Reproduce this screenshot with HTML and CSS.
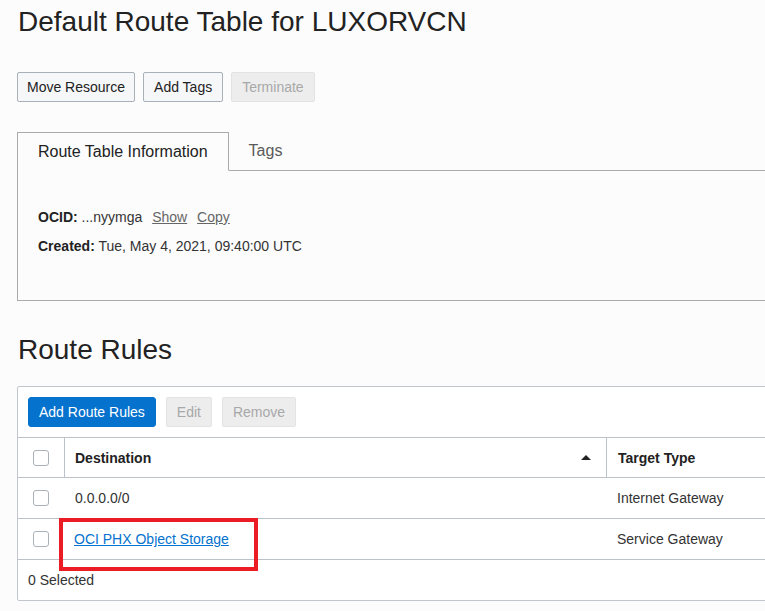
FILE: index.html
```html
<!DOCTYPE html>
<html>
<head>
<meta charset="utf-8">
<link rel="stylesheet" href="styles.css">
</head>
<body>
<div class="page">
  <h1 class="title">Default Route Table for LUXORVCN</h1>
  <div class="actions">
    <button class="btn tight">Move Resource</button>
    <button class="btn">Add Tags</button>
    <button class="btn disabled">Terminate</button>
  </div>

  <div class="tabpanel">
    <div class="tabs">
      <div class="tab active">Route Table Information</div>
      <div class="tab">Tags</div>
      <div class="tab-fill"></div>
    </div>
    <div class="info">
      <div class="info-row"><b>OCID:</b> ...nyymga <a class="minilink">Show</a> <a class="minilink">Copy</a></div>
      <div class="info-row"><b>Created:</b> Tue, May 4, 2021, 09:40:00 UTC</div>
    </div>
  </div>

  <h2 class="title section">Route Rules</h2>

  <div class="tablebox">
    <div class="toolbar">
      <button class="btn primary">Add Route Rules</button>
      <button class="btn disabled">Edit</button>
      <button class="btn disabled">Remove</button>
    </div>
    <div class="grid">
      <div class="cell head check"><span class="cb"></span></div>
      <div class="cell head dest">Destination <span class="sort"></span></div>
      <div class="cell head target">Target Type</div>

      <div class="cell check"><span class="cb"></span></div>
      <div class="cell">0.0.0.0/0</div>
      <div class="cell">Internet Gateway</div>

      <div class="cell check"><span class="cb"></span></div>
      <div class="cell link-cell"><a class="link">OCI PHX Object Storage</a></div>
      <div class="cell">Service Gateway</div>
    </div>
    <div class="footer">0 Selected</div>
    <div class="highlight"></div>
  </div>
</div>
</body>
</html>
```
FILE: styles.css
```css
html { overflow: hidden; }
body {
  margin: 0;
  background: #fcfcfc;
  font-family: "Liberation Sans", Arial, sans-serif;
  color: #333;
}
.page {
  width: 1000px;
  padding: 5px 0 0 17px;
}
.title {
  margin: 0;
  font-size: 28px;
  font-weight: normal;
  line-height: 34px;
  color: #222;
  padding-left: 1px;
}
.actions {
  display: flex;
  gap: 8px;
  margin-top: 33px;
}
.btn {
  font-family: "Liberation Sans", Arial, sans-serif;
  font-size: 14px;
  height: 30px;
  padding: 0 10px;
  border: 1px solid #a8b0b9;
  border-radius: 2px;
  background: #f6f7f8;
  color: #222;
  line-height: 28px;
}
.btn.tight { padding: 0 9px; }
.btn.disabled {
  background: #ededed;
  border-color: #e3e3e3;
  color: #a8a8a8;
}
.btn.primary {
  background: #0572ce;
  border-color: #0572ce;
  color: #fff;
  border-radius: 3px;
}
.tabpanel {
  margin-top: 30px;
  border-left: 1px solid #aaa;
  border-bottom: 1px solid #aaa;
  height: 169px;
  box-sizing: border-box;
}
.tabs {
  display: flex;
  height: 39px;
}
.tab {
  font-size: 16px;
  line-height: 37px;
  padding: 0 20px;
  white-space: nowrap;
  color: #5a5a5a;
  border-bottom: 1px solid #aaa;
}
.tab.active {
  color: #222;
  border-top: 1px solid #aaa;
  border-right: 1px solid #aaa;
  border-bottom: 1px solid transparent;
}
.tab-fill {
  flex: 1;
  border-bottom: 1px solid #aaa;
}
.info {
  padding: 32px 0 0 20px;
  font-size: 14px;
  color: #333;
}
.info-row {
  line-height: 28px;
}
.info-row + .info-row { margin-top: 1px; }
.info-row b { color: #222; }
.minilink {
  color: #666;
  text-decoration: underline;
  margin-left: 6px;
}
.section {
  margin-top: 32px;
}
.tablebox {
  position: relative;
  margin-top: 19px;
  background: #fff;
  border: 1px solid #c1c6cc;
  border-radius: 2px;
}
.toolbar {
  display: flex;
  gap: 10px;
  padding: 10px 10px 10px 10px;
}
.grid {
  display: grid;
  grid-template-columns: 47px 542px 1fr;
  font-size: 14px;
}
.cell {
  height: 41px;
  display: flex;
  align-items: center;
  padding-left: 10px;
  border-top: 1px solid #bcc2c9;
  box-sizing: border-box;
  color: #333;
}
.cell.head {
  font-weight: bold;
  color: #222;
  height: 40px;
}
.cell.check {
  padding-left: 15px;
}
.cell.head.check,
.cell.head.dest {
  border-right: 1px solid #bcc2c9;
}
.cell.head.target { padding-left: 11px; }
.cell.head.dest {
  justify-content: space-between;
  padding-right: 15px;
}
.link-cell { padding-left: 9px; }
.sort {
  width: 0;
  height: 0;
  border-left: 5px solid transparent;
  border-right: 5px solid transparent;
  border-bottom: 5px solid #222;
}
.cb {
  width: 14px;
  height: 14px;
  border: 1px solid #aab1b9;
  border-radius: 3px;
  background: #fff;
}
.link {
  color: #0572ce;
  text-decoration: underline;
}
.footer {
  border-top: 1px solid #bcc2c9;
  height: 40px;
  line-height: 40px;
  padding-left: 10px;
  font-size: 14px;
  color: #333;
}
.highlight {
  position: absolute;
  left: 41px;
  top: 131px;
  width: 191px;
  height: 45px;
  border: 4px solid #ec1c24;
}
```
